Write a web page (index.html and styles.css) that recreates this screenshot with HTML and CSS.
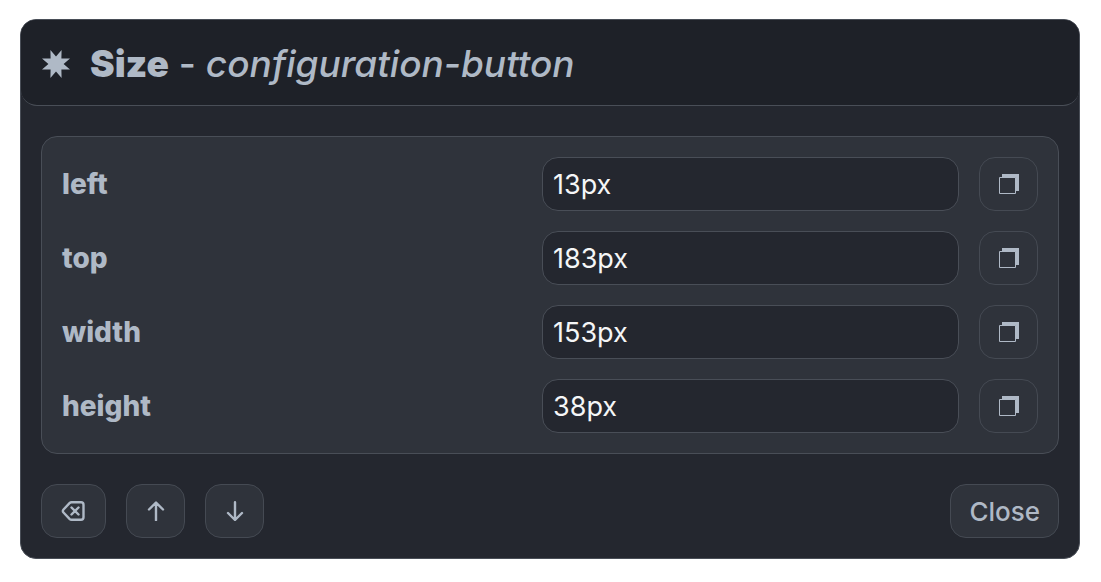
FILE: index.html
```
<!DOCTYPE html>
<html lang="en">
 <head>
  <meta charset="utf-8">
  <title>Size</title>
  <link rel="stylesheet" href="styles.css">
 </head>
 <body>
  <form class="dialog">
   <!-- Title bar -->
   <header class="dialog-header">
    <svg class="star" viewBox="0 0 30 30" aria-hidden="true">
     <path d="M9.400 1L15 7.400 20.600 1l-.2 8.600 8.600-.2L22.600 15l6.400 5.600-8.600-.2.2 8.600L15 22.600 9.400 29l.2-8.600-8.600.2L7.400 15 1 9.400l8.600.2z"/>
    </svg>
    <h1><strong>Size</strong> - <em>configuration-button</em></h1>
   </header>
   <!-- One row for each property -->
   <div class="fields">
    <div class="row">
     <label for="left">left</label>
     <input type="text" id="left" value="13px">
     <button type="button" class="button" aria-label="Copy left">
      <svg class="copy" viewBox="0 0 21 20"><path class="shadow" d="M4 0h17v17H4z"/><path class="sheet" d="M1.500 3.500h16v16h-16z"/></svg>
     </button>
    </div>
    <div class="row">
     <label for="top">top</label>
     <input type="text" id="top" value="183px">
     <button type="button" class="button" aria-label="Copy top">
      <svg class="copy" viewBox="0 0 21 20"><path class="shadow" d="M4 0h17v17H4z"/><path class="sheet" d="M1.500 3.500h16v16h-16z"/></svg>
     </button>
    </div>
    <div class="row">
     <label for="width">width</label>
     <input type="text" id="width" value="153px">
     <button type="button" class="button" aria-label="Copy width">
      <svg class="copy" viewBox="0 0 21 20"><path class="shadow" d="M4 0h17v17H4z"/><path class="sheet" d="M1.500 3.500h16v16h-16z"/></svg>
     </button>
    </div>
    <div class="row">
     <label for="height">height</label>
     <input type="text" id="height" value="38px">
     <button type="button" class="button" aria-label="Copy height">
      <svg class="copy" viewBox="0 0 21 20"><path class="shadow" d="M4 0h17v17H4z"/><path class="sheet" d="M1.500 3.500h16v16h-16z"/></svg>
     </button>
    </div>
   </div>
   <!-- Actions -->
   <footer class="actions">
    <button type="button" class="button" aria-label="Clear">
     <svg class="icon wide" viewBox="-1 0 27 20"><path d="M10.500 1.200H20q2.500 0 2.500 2.500v12.600q0 2.500-2.500 2.500H10.500q-1 0-2-1L2.500 11.500q-1.300-1.500 0-3l6-6.300q1-1 2-1zM10.500 6.500l7 7M17.500 6.500l-7 7"/></svg>
    </button>
    <button type="button" class="button" aria-label="Move up">
     <svg class="icon" viewBox="0 0 21 20"><path d="M11 19.200V2M4 8.500l7-7 7 7"/></svg>
    </button>
    <button type="button" class="button" aria-label="Move down">
     <svg class="icon" viewBox="0 0 21 20"><path d="M11 1.200V18M4 12l7 7 7-7"/></svg>
    </button>
    <button type="button" class="button close">Close</button>
   </footer>
  </form>
 </body>
</html>
```
FILE: styles.css
```
* {
 box-sizing: border-box;
}
body {
 margin: 19px 21px 23px 20px;
 font-family: Inter, sans-serif;
 font-size: 27px;
 color: #afb9c6;
 background-color: #fff;
}
/* Dialog */
.dialog {
 background-color: #24272f;
 border: 1px solid #494e57;
 border-radius: 16px;
 overflow: hidden;
}
.dialog-header {
 display: flex;
 align-items: center;
 gap: 19px;
 padding: 19px 20px 17px;
 background-color: #1e2128;
 border-bottom: 1px solid #494e57;
 border-radius: 0 0 16px 16px;
}
.dialog-header h1 {
 margin: 0;
 font-size: 37px;
 line-height: 49px;
 font-weight: 500;
}
.dialog-header strong {
 font-weight: 900;
}
.star {
 width: 30px;
 height: 30px;
 fill: #afb9c6;
}
/* Property rows */
.fields {
 display: grid;
 gap: 20px;
 margin: 30px 20px;
 padding: 20px;
 background-color: #2f333b;
 border: 1px solid #494e57;
 border-radius: 16px;
}
.row {
 display: grid;
 grid-template-columns: 460fr 417fr auto;
 gap: 20px;
 align-items: center;
}
.row label {
 font-size: 28px;
 font-weight: 800;
}
.row input {
 width: 100%;
 min-width: 0;
 height: 54px;
 padding: 0 10px;
 font: inherit;
 color: #f5f6f7;
 background-color: #24272f;
 border: 1px solid #494e57;
 border-radius: 16px;
}
/* Buttons */
.button {
 display: flex;
 align-items: center;
 justify-content: center;
 height: 54px;
 padding: 0 18px;
 font: inherit;
 font-size: 26px;
 font-weight: 500;
 color: #afb9c6;
 background-color: #2f333b;
 border: 1px solid #454a53;
 border-radius: 16px;
}
.actions {
 display: flex;
 gap: 20px;
 margin: 0 20px 20px;
}
.close {
 margin-left: auto;
}
/* Icons */
.copy {
 width: 21px;
 height: 20px;
}
.shadow {
 fill: #afb9c6;
}
.sheet {
 fill: #2f333b;
 stroke: #afb9c6;
}
.icon {
 width: 21px;
 height: 20px;
 fill: none;
 stroke: #afb9c6;
 stroke-width: 2.4;
 stroke-linecap: round;
 stroke-linejoin: round;
}
.wide {
 width: 27px;
}
```
